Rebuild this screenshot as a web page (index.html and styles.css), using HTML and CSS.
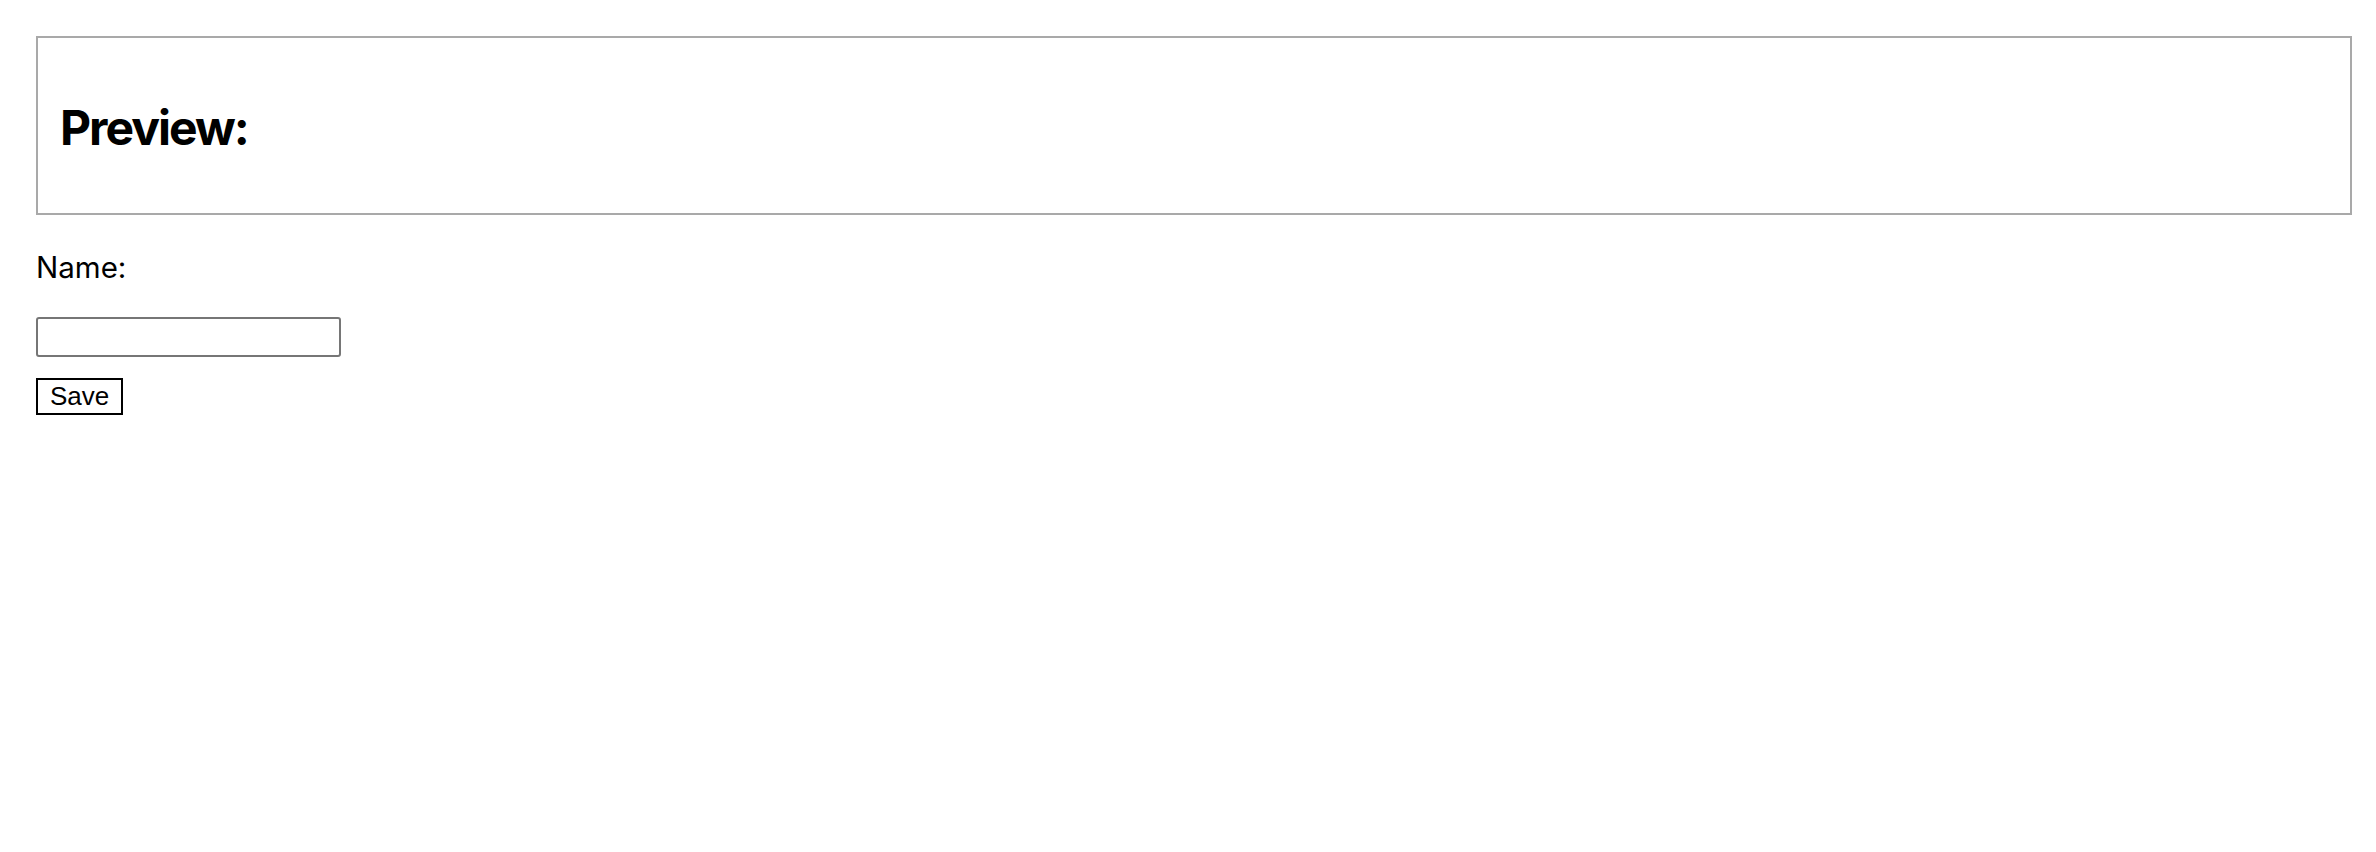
FILE: index.html
```html
<!DOCTYPE html>
<html lang="en">
<head>
  <meta charset="UTF-8">
  <meta name="viewport" content="width=device-width, initial-scale=1.0">
  <title>Preview</title>
  <link rel="stylesheet" href="styles.css">
</head>
<body>
  <div class="preview">
    <h2>Preview: <span id="preview-name"></span></h2>
  </div>

  <p class="label">Name:</p>
  <div class="field">
    <input type="text" id="name-input">
  </div>
  <button class="save" onclick="save()">Save</button>

  <script>
    function save() {
      const name = document.getElementById("name-input").value;
      document.getElementById("preview-name").textContent = name;
    }
  </script>
</body>
</html>
```

FILE: styles.css
```css
* {
  box-sizing: border-box;
}

body {
  margin: 0;
  padding: 36px 24px 36px 36px;
  font-family: Inter, "Noto Sans", sans-serif;
  color: #000;
  background-color: #fff;
}

.preview {
  border: 2px solid #a9a9a9;
  padding: 21px 22px 20px;
}

.preview h2 {
  margin: 40px 0 36px;
  font-size: 48px;
  font-weight: 700;
  line-height: 58px;
  letter-spacing: -2px;
}

.label {
  margin: 34px 0 32px;
  font-size: 29.5px;
  line-height: 36px;
}

.field input {
  display: block;
  width: 305px;
  height: 40px;
  margin: 0 0 21px;
  border: 2px solid #767676;
  border-radius: 3px;
  font-size: 24px;
}

.save {
  display: block;
  height: 37px;
  padding: 0 12px;
  background-color: #fff;
  border: 2px solid #000;
  border-radius: 0;
  font-family: "Liberation Sans", Arial, sans-serif;
  font-size: 26px;
  line-height: 31px;
  color: #000;
}
```
